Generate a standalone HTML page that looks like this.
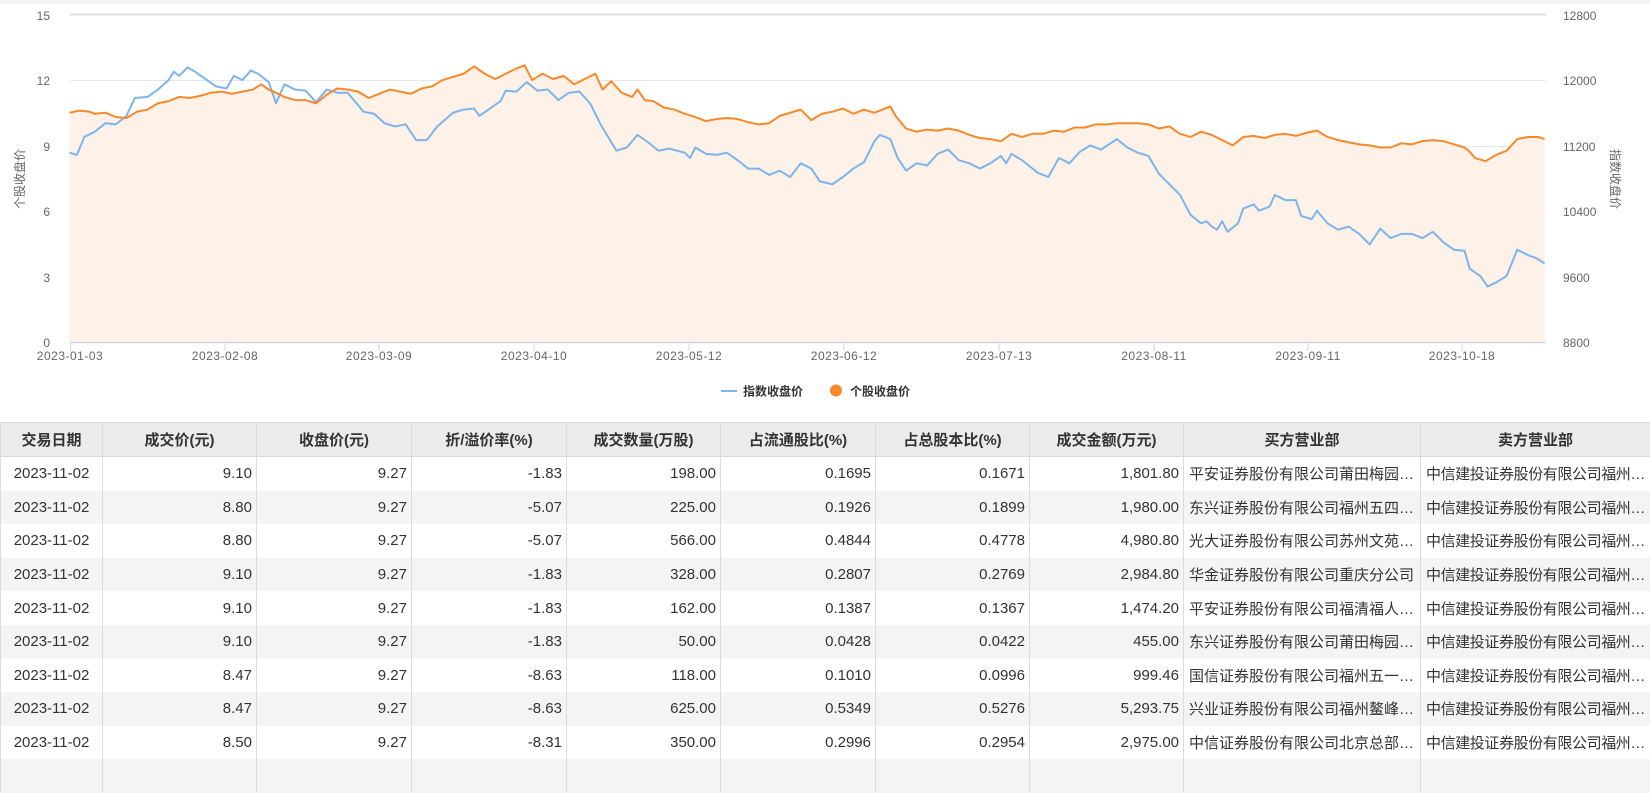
<!DOCTYPE html>
<html><head><meta charset="utf-8">
<style>
html,body{margin:0;padding:0;background:#fff;width:1650px;height:760px;overflow:hidden;font-family:"Liberation Sans","Noto Sans CJK SC",sans-serif;}
.top{position:absolute;left:0;top:0;width:1650px;height:4px;background:#f2f2f2;}
svg{position:absolute;left:0;top:0;}
table{position:absolute;left:0;top:422px;border-collapse:collapse;table-layout:fixed;width:1650px;font-size:15px;color:#333;}
th{background:#ebebeb;height:33px;font-weight:bold;border:1px solid #dcdcdc;padding:0;text-align:center;}
td{height:33.6px;border-left:1px solid #dcdcdc;border-right:1px solid #dcdcdc;padding:0 4px;white-space:nowrap;overflow:hidden;text-overflow:ellipsis;text-align:right;}
td:first-child{text-align:center;}
td.l{text-align:left;padding-left:5px;}
td.s{letter-spacing:-0.4px;padding-right:2px;}
tr:nth-child(odd) td{background:#f4f4f4;}
</style></head><body>
<div class="top"></div>
<svg width="1650" height="420" xmlns="http://www.w3.org/2000/svg" font-family="Liberation Sans, Noto Sans CJK SC, sans-serif">
<g stroke="#e6e6e6" stroke-width="1">
<line x1="70" y1="14.5" x2="1546" y2="14.5" stroke="#dedede" stroke-width="2"/>
<line x1="70" y1="80.5" x2="1546" y2="80.5"/>
<line x1="70" y1="146.5" x2="1546" y2="146.5"/>
<line x1="70" y1="211.5" x2="1546" y2="211.5"/>
<line x1="70" y1="277.5" x2="1546" y2="277.5"/>
</g>
<g transform="scale(1.0536)">
<polygon fill="#fef1e7" points="66,107 75,105 85,106 90,108 100,107 110,111 120,112 130,106 140,104 150,98 160,96 170,92 180,93 190,91 200,88 210,87 220,89 230,87 240,85 248,80 255,85 262,88 270,92 280,95 290,95 300,98 310,90 320,84 330,85 340,87 350,93 360,89 370,85 380,87 390,89 400,84 410,82 420,76 430,73 440,70 450,63 460,70 470,75 480,70 490,65 498,62 505,76 515,70 525,75 535,72 545,80 555,75 565,70 572,85 580,77 590,88 600,92 605,85 612,95 620,96 630,102 640,104 650,108 660,111 670,115 680,113 690,112 700,113 710,116 720,118 730,117 740,110 750,107 760,104 770,114 780,108 790,106 800,103 810,108 820,104 830,107 845,101 850,110 860,122 870,125 880,123 890,124 900,122 910,124 920,128 930,131 940,132 950,134 960,127 970,130 980,127 990,127 1000,124 1010,125 1020,121 1030,121 1040,118 1050,118 1060,117 1070,117 1080,117 1090,118 1100,122 1110,120 1120,127 1130,130 1140,125 1150,128 1160,133 1170,138 1180,130 1190,129 1200,131 1210,128 1220,127 1230,129 1240,126 1250,124 1260,130 1270,133 1280,135 1290,137 1300,138 1310,140 1320,140 1330,136 1340,137 1350,134 1360,133 1370,134 1380,137 1390,140 1395,144 1400,150 1410,153 1420,147 1430,143 1440,132 1450,130 1460,130 1466,132 1466,324 66,324"/>
<polyline fill="none" stroke="#7cb5ec" stroke-width="1.9" stroke-linejoin="round" points="66,145 73,147 80,130 90,125 100,117 110,118 120,110 128,93 140,92 150,85 160,76 165,68 170,72 178,64 185,68 195,75 205,82 215,84 222,72 230,76 238,67 245,70 255,78 262,98 270,80 280,85 290,86 300,97 310,85 320,88 330,88 345,106 355,108 365,117 375,120 385,118 395,133 405,133 415,120 430,107 440,104 450,103 455,110 465,103 475,96 480,86 490,87 500,78 510,86 520,85 530,95 540,88 550,87 560,98 570,118 585,143 595,140 605,128 615,135 625,143 635,141 650,145 655,150 660,140 670,146 680,147 690,145 700,152 710,160 720,160 730,166 740,162 750,168 760,155 770,160 778,172 790,175 800,168 810,160 820,154 830,134 835,128 845,132 852,150 860,162 870,155 880,157 890,146 900,142 910,152 920,155 930,160 940,155 950,148 955,155 960,146 970,152 985,164 995,168 1005,150 1015,155 1025,144 1035,138 1045,142 1060,132 1070,140 1080,145 1090,148 1100,165 1110,175 1120,185 1130,204 1140,212 1145,210 1150,215 1155,218 1160,210 1165,220 1175,212 1180,198 1190,194 1195,200 1205,196 1210,185 1220,190 1230,190 1235,205 1245,208 1250,200 1260,212 1270,218 1280,215 1290,222 1300,232 1310,217 1320,226 1330,222 1340,222 1350,226 1360,220 1370,230 1380,237 1390,238 1395,255 1405,262 1412,272 1420,268 1430,262 1440,237 1450,242 1458,245 1466,250"/>
<polyline fill="none" stroke="#f7892b" stroke-width="1.9" stroke-linejoin="round" points="66,107 75,105 85,106 90,108 100,107 110,111 120,112 130,106 140,104 150,98 160,96 170,92 180,93 190,91 200,88 210,87 220,89 230,87 240,85 248,80 255,85 262,88 270,92 280,95 290,95 300,98 310,90 320,84 330,85 340,87 350,93 360,89 370,85 380,87 390,89 400,84 410,82 420,76 430,73 440,70 450,63 460,70 470,75 480,70 490,65 498,62 505,76 515,70 525,75 535,72 545,80 555,75 565,70 572,85 580,77 590,88 600,92 605,85 612,95 620,96 630,102 640,104 650,108 660,111 670,115 680,113 690,112 700,113 710,116 720,118 730,117 740,110 750,107 760,104 770,114 780,108 790,106 800,103 810,108 820,104 830,107 845,101 850,110 860,122 870,125 880,123 890,124 900,122 910,124 920,128 930,131 940,132 950,134 960,127 970,130 980,127 990,127 1000,124 1010,125 1020,121 1030,121 1040,118 1050,118 1060,117 1070,117 1080,117 1090,118 1100,122 1110,120 1120,127 1130,130 1140,125 1150,128 1160,133 1170,138 1180,130 1190,129 1200,131 1210,128 1220,127 1230,129 1240,126 1250,124 1260,130 1270,133 1280,135 1290,137 1300,138 1310,140 1320,140 1330,136 1340,137 1350,134 1360,133 1370,134 1380,137 1390,140 1395,144 1400,150 1410,153 1420,147 1430,143 1440,132 1450,130 1460,130 1466,132"/>
</g>
<line x1="70" y1="342.5" x2="1546" y2="342.5" stroke="#ccd6eb" stroke-width="1.5"/>
<g stroke="#ccd6eb" stroke-width="1">
<line x1="70.5" y1="343" x2="70.5" y2="351"/><line x1="225" y1="343" x2="225" y2="351"/><line x1="379" y1="343" x2="379" y2="351"/><line x1="534" y1="343" x2="534" y2="351"/><line x1="689" y1="343" x2="689" y2="351"/><line x1="844" y1="343" x2="844" y2="351"/><line x1="999" y1="343" x2="999" y2="351"/><line x1="1154" y1="343" x2="1154" y2="351"/><line x1="1308" y1="343" x2="1308" y2="351"/><line x1="1462" y1="343" x2="1462" y2="351"/>
</g>
<g font-size="12" fill="#666" text-anchor="end">
<text x="50" y="20">15</text><text x="50" y="85">12</text><text x="50" y="151">9</text><text x="50" y="216">6</text><text x="50" y="282">3</text><text x="50" y="347">0</text>
</g>
<g font-size="12" fill="#666" text-anchor="start">
<text x="1563" y="20">12800</text><text x="1563" y="85">12000</text><text x="1563" y="151">11200</text><text x="1563" y="216">10400</text><text x="1563" y="282">9600</text><text x="1563" y="347">8800</text>
</g>
<g font-size="12" fill="#666" text-anchor="middle" letter-spacing="0.5">
<text x="70" y="360">2023-01-03</text><text x="225" y="360">2023-02-08</text><text x="379" y="360">2023-03-09</text><text x="534" y="360">2023-04-10</text><text x="689" y="360">2023-05-12</text><text x="844" y="360">2023-06-12</text><text x="999" y="360">2023-07-13</text><text x="1154" y="360">2023-08-11</text><text x="1308" y="360">2023-09-11</text><text x="1462" y="360">2023-10-18</text>
</g>
<text font-size="12" fill="#666" text-anchor="middle" transform="translate(24,179) rotate(-90)">个股收盘价</text>
<text font-size="12" fill="#666" text-anchor="middle" transform="translate(1611,179) rotate(90)">指数收盘价</text>
<line x1="721" y1="391" x2="737" y2="391" stroke="#7cb5ec" stroke-width="2"/>
<text x="743" y="395.5" font-size="12" font-weight="bold" fill="#333">指数收盘价</text>
<circle cx="836" cy="390.5" r="6" fill="#f7892b"/>
<text x="850" y="395.5" font-size="12" font-weight="bold" fill="#333">个股收盘价</text>
</svg>
<table>
<colgroup><col style="width:102px"><col style="width:154px"><col style="width:155px"><col style="width:155px"><col style="width:154px"><col style="width:155px"><col style="width:154px"><col style="width:154px"><col style="width:237px"><col style="width:230px"></colgroup>
<tr><th>交易日期</th><th>成交价(元)</th><th>收盘价(元)</th><th>折/溢价率(%)</th><th>成交数量(万股)</th><th>占流通股比(%)</th><th>占总股本比(%)</th><th>成交金额(万元)</th><th>买方营业部</th><th>卖方营业部</th></tr>
<tr><td>2023-11-02</td><td>9.10</td><td>9.27</td><td>-1.83</td><td>198.00</td><td>0.1695</td><td>0.1671</td><td>1,801.80</td><td class="l">平安证券股份有限公司莆田梅园…</td><td class="l s">中信建投证券股份有限公司福州…</td></tr>
<tr><td>2023-11-02</td><td>8.80</td><td>9.27</td><td>-5.07</td><td>225.00</td><td>0.1926</td><td>0.1899</td><td>1,980.00</td><td class="l">东兴证券股份有限公司福州五四…</td><td class="l s">中信建投证券股份有限公司福州…</td></tr>
<tr><td>2023-11-02</td><td>8.80</td><td>9.27</td><td>-5.07</td><td>566.00</td><td>0.4844</td><td>0.4778</td><td>4,980.80</td><td class="l">光大证券股份有限公司苏州文苑…</td><td class="l s">中信建投证券股份有限公司福州…</td></tr>
<tr><td>2023-11-02</td><td>9.10</td><td>9.27</td><td>-1.83</td><td>328.00</td><td>0.2807</td><td>0.2769</td><td>2,984.80</td><td class="l">华金证券股份有限公司重庆分公司</td><td class="l s">中信建投证券股份有限公司福州…</td></tr>
<tr><td>2023-11-02</td><td>9.10</td><td>9.27</td><td>-1.83</td><td>162.00</td><td>0.1387</td><td>0.1367</td><td>1,474.20</td><td class="l">平安证券股份有限公司福清福人…</td><td class="l s">中信建投证券股份有限公司福州…</td></tr>
<tr><td>2023-11-02</td><td>9.10</td><td>9.27</td><td>-1.83</td><td>50.00</td><td>0.0428</td><td>0.0422</td><td>455.00</td><td class="l">东兴证券股份有限公司莆田梅园…</td><td class="l s">中信建投证券股份有限公司福州…</td></tr>
<tr><td>2023-11-02</td><td>8.47</td><td>9.27</td><td>-8.63</td><td>118.00</td><td>0.1010</td><td>0.0996</td><td>999.46</td><td class="l">国信证券股份有限公司福州五一…</td><td class="l s">中信建投证券股份有限公司福州…</td></tr>
<tr><td>2023-11-02</td><td>8.47</td><td>9.27</td><td>-8.63</td><td>625.00</td><td>0.5349</td><td>0.5276</td><td>5,293.75</td><td class="l">兴业证券股份有限公司福州鳌峰…</td><td class="l s">中信建投证券股份有限公司福州…</td></tr>
<tr><td>2023-11-02</td><td>8.50</td><td>9.27</td><td>-8.31</td><td>350.00</td><td>0.2996</td><td>0.2954</td><td>2,975.00</td><td class="l">中信证券股份有限公司北京总部…</td><td class="l s">中信建投证券股份有限公司福州…</td></tr>
<tr><td>&nbsp;</td><td></td><td></td><td></td><td></td><td></td><td></td><td></td><td class="l"></td><td class="l"></td></tr>
</table>
</body></html>
